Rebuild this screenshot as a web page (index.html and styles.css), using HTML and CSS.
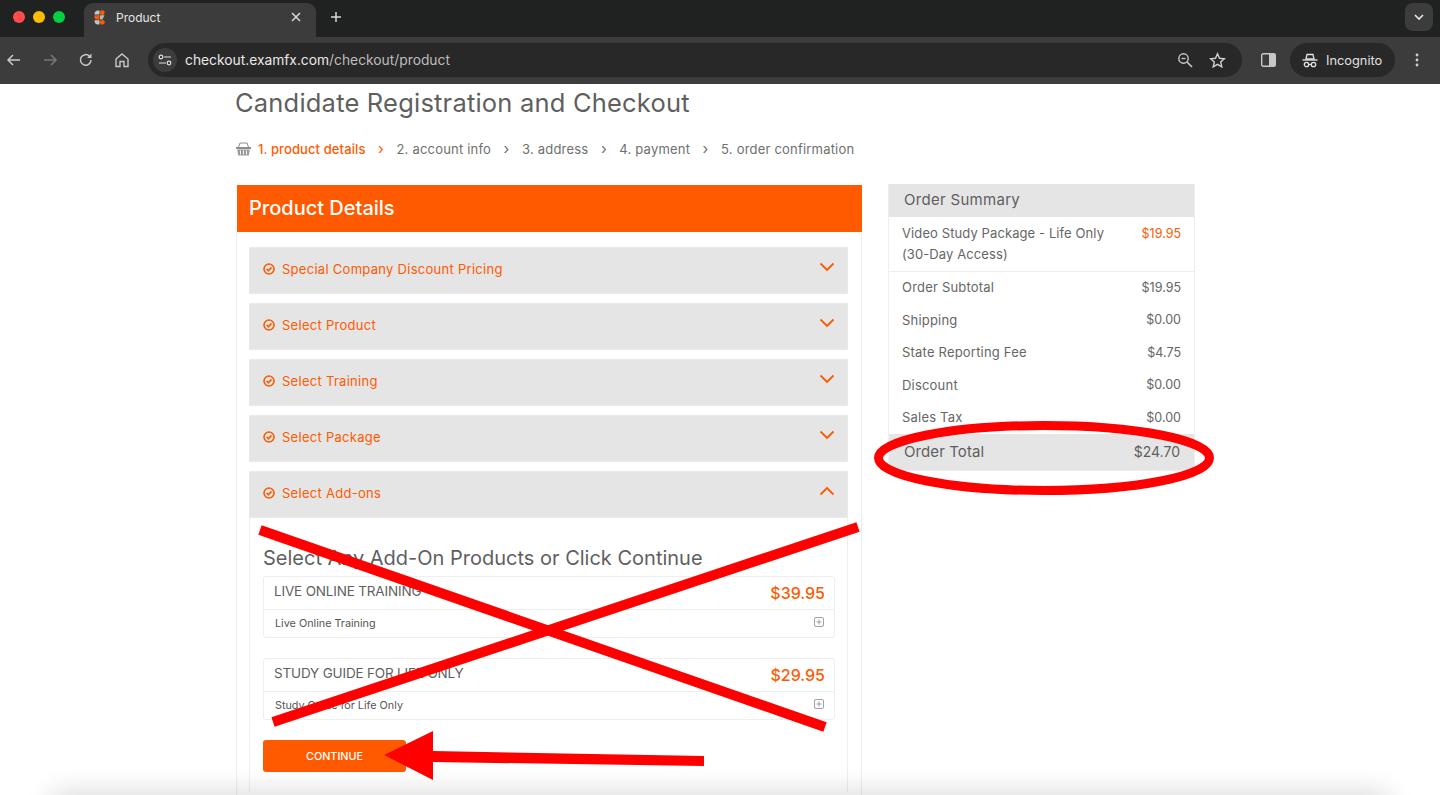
FILE: index.html
```html
<!DOCTYPE html>
<html lang="en">
<head>
  <meta charset="UTF-8" />
  <title>Product</title>
  <link rel="stylesheet" href="styles.css">
</head>
<body>

  <!-- Browser tabs -->
  <div class="tabstrip">
    <div class="traffic">
      <span class="dot red"></span>
      <span class="dot yellow"></span>
      <span class="dot green"></span>
    </div>
    <div class="tab">
      <svg class="favicon" width="11" height="15" viewBox="0 0 11 15">
        <path d="M5.500 0.500 H4 Q0.500 0.500 0.500 4.500 H5.500 Z" fill="#c4c4c4"/>
        <circle cx="8.300" cy="2.700" r="2.400" fill="#ff5a00"/>
        <path d="M0.500 5.200 H5.500 V9.500 H3 Q0.500 9.500 0.500 7.300 Z" fill="#ff5a00"/>
        <path d="M6 5.200 H10.500 L8.500 9.500 H6 Z" fill="#b5b5b5"/>
        <path d="M0.500 10.200 H5.500 V14.500 H4 Q0.500 14.500 0.500 10.200 Z" fill="#c4c4c4"/>
        <circle cx="8.300" cy="12.300" r="2.400" fill="#ff5a00"/>
      </svg>
      <span class="tab-title">Product</span>
      <svg class="tab-close" width="10" height="10" viewBox="0 0 10 10">
        <path d="M1 1 L9 9 M9 1 L1 9" stroke="#d8d8d8" stroke-width="1.500"/>
      </svg>
    </div>
    <svg class="new-tab" width="12" height="12" viewBox="0 0 12 12">
      <path d="M6 1 V11 M1 6 H11" stroke="#d8d8d8" stroke-width="1.500"/>
    </svg>
    <div class="tab-search">
      <svg width="10" height="7" viewBox="0 0 10 7">
        <path d="M1 1 L5 5 L9 1" fill="none" stroke="#e8e8e8" stroke-width="1.600"/>
      </svg>
    </div>
  </div>

  <!-- Browser toolbar -->
  <div class="toolbar">
    <svg class="tool back" width="16" height="16" viewBox="0 0 16 16">
      <path d="M14 8 H2 M7 3 L2 8 L7 13" fill="none" stroke="#c8c8c8" stroke-width="1.500"/>
    </svg>
    <svg class="tool forward" width="16" height="16" viewBox="0 0 16 16">
      <path d="M2 8 H14 M9 3 L14 8 L9 13" fill="none" stroke="#777" stroke-width="1.500"/>
    </svg>
    <svg class="tool reload" width="16" height="16" viewBox="0 0 16 16">
      <path d="M13 8 A5.300 5.300 0 1 1 11.500 4.200" fill="none" stroke="#c8c8c8" stroke-width="1.500"/>
      <path d="M13.500 1.500 V6 H9 Z" fill="#c8c8c8"/>
    </svg>
    <svg class="tool home" width="16" height="16" viewBox="0 0 16 16">
      <path d="M2 7 L8 2 L14 7 V14.500 H10 V9.500 H6 V14.500 H2 Z" fill="none" stroke="#c8c8c8" stroke-width="1.400"/>
    </svg>
    <div class="omnibox">
      <span class="site-info">
        <svg width="14" height="12" viewBox="0 0 14 12">
          <circle cx="3" cy="3" r="1.800" fill="none" stroke="#e0e0e0" stroke-width="1.200"/>
          <path d="M6 3 H13 M1 9 H8" stroke="#e0e0e0" stroke-width="1.200"/>
          <circle cx="11" cy="9" r="1.800" fill="none" stroke="#e0e0e0" stroke-width="1.200"/>
        </svg>
      </span>
      <span class="url"><span class="url-host">checkout.examfx.com</span>/checkout/product</span>
      <svg class="zoom-icon" width="16" height="16" viewBox="0 0 16 16">
        <circle cx="6.500" cy="6.500" r="4.700" fill="none" stroke="#c8c8c8" stroke-width="1.400"/>
        <path d="M4.500 6.500 H8.500" stroke="#c8c8c8" stroke-width="1.300"/>
        <path d="M10 10 L15 15" stroke="#c8c8c8" stroke-width="1.600"/>
      </svg>
      <svg class="star-icon" width="17" height="17" viewBox="0 0 17 17">
        <path d="M8.500 1.800 L10.500 6.300 L15.400 6.800 L11.700 10 L12.800 14.900 L8.500 12.400 L4.200 14.900 L5.300 10 L1.600 6.800 L6.500 6.300 Z" fill="none" stroke="#d0d0d0" stroke-width="1.400"/>
      </svg>
    </div>
    <svg class="side-panel" width="15" height="14" viewBox="0 0 15 14">
      <rect x="0.700" y="0.700" width="13.600" height="12.600" rx="1.500" fill="none" stroke="#c8c8c8" stroke-width="1.400"/>
      <rect x="8" y="1" width="6" height="12" fill="#c8c8c8"/>
    </svg>
    <div class="incognito">
      <svg width="16" height="15" viewBox="0 0 16 15">
        <path d="M4 6 L5 1.500 H11 L12 6 Z" fill="none" stroke="#e0e0e0" stroke-width="1.300"/>
        <path d="M0.500 7 H15.500" stroke="#e0e0e0" stroke-width="1.400"/>
        <circle cx="4.500" cy="11.500" r="2.200" fill="none" stroke="#e0e0e0" stroke-width="1.300"/>
        <circle cx="11.500" cy="11.500" r="2.200" fill="none" stroke="#e0e0e0" stroke-width="1.300"/>
        <path d="M6.700 11.500 H9.300" stroke="#e0e0e0" stroke-width="1.200"/>
      </svg>
      <span>Incognito</span>
    </div>
    <svg class="menu-dots" width="4" height="14" viewBox="0 0 4 14">
      <circle cx="2" cy="2" r="1.400" fill="#d0d0d0"/>
      <circle cx="2" cy="7" r="1.400" fill="#d0d0d0"/>
      <circle cx="2" cy="12" r="1.400" fill="#d0d0d0"/>
    </svg>
  </div>

  <!-- Page -->
  <main class="page">
    <h1 class="page-title">Candidate Registration and Checkout</h1>

    <ul class="steps">
      <li class="step active">
        <svg class="basket" width="15" height="14" viewBox="0 0 15 14">
          <path d="M2.500 5 L4 1 H11 L12.500 5" stroke="#8c8c8c" stroke-width="1" fill="none"/>
          <path d="M0 5 H15 V7 H0 Z" fill="#8c8c8c"/>
          <path d="M1.200 7.500 H13.800 L12.800 13.500 H2.200 Z" fill="#9a9a9a"/>
          <path d="M4.500 8.500 V12.500 M7.500 8.500 V12.500 M10.500 8.500 V12.500" stroke="#fff" stroke-width="0.900"/>
        </svg>
        1. product details
      </li>
      <li class="sep active">›</li>
      <li class="step">2. account info</li>
      <li class="sep">›</li>
      <li class="step">3. address</li>
      <li class="sep">›</li>
      <li class="step">4. payment</li>
      <li class="sep">›</li>
      <li class="step">5. order confirmation</li>
    </ul>

    <div class="columns">
      <section class="details">
        <h2 class="details-head">Product Details</h2>
        <div class="details-body">

          <div class="acc-bar">
            <svg class="check" width="12" height="12" viewBox="0 0 12 12"><circle cx="6" cy="6" r="5"/><path d="M3.600 6 L5.400 7.800 L8.500 4.400"/></svg>
            <span>Special Company Discount Pricing</span>
            <svg class="chev" width="16" height="10" viewBox="0 0 16 10"><path d="M1.500 1.500 L8 8 L14.500 1.500"/></svg>
          </div>
          <div class="acc-bar">
            <svg class="check" width="12" height="12" viewBox="0 0 12 12"><circle cx="6" cy="6" r="5"/><path d="M3.600 6 L5.400 7.800 L8.500 4.400"/></svg>
            <span>Select Product</span>
            <svg class="chev" width="16" height="10" viewBox="0 0 16 10"><path d="M1.500 1.500 L8 8 L14.500 1.500"/></svg>
          </div>
          <div class="acc-bar">
            <svg class="check" width="12" height="12" viewBox="0 0 12 12"><circle cx="6" cy="6" r="5"/><path d="M3.600 6 L5.400 7.800 L8.500 4.400"/></svg>
            <span>Select Training</span>
            <svg class="chev" width="16" height="10" viewBox="0 0 16 10"><path d="M1.500 1.500 L8 8 L14.500 1.500"/></svg>
          </div>
          <div class="acc-bar">
            <svg class="check" width="12" height="12" viewBox="0 0 12 12"><circle cx="6" cy="6" r="5"/><path d="M3.600 6 L5.400 7.800 L8.500 4.400"/></svg>
            <span>Select Package</span>
            <svg class="chev" width="16" height="10" viewBox="0 0 16 10"><path d="M1.500 1.500 L8 8 L14.500 1.500"/></svg>
          </div>
          <div class="acc-bar">
            <svg class="check" width="12" height="12" viewBox="0 0 12 12"><circle cx="6" cy="6" r="5"/><path d="M3.600 6 L5.400 7.800 L8.500 4.400"/></svg>
            <span>Select Add-ons</span>
            <svg class="chev" width="16" height="10" viewBox="0 0 16 10"><path d="M1.500 8.500 L8 2 L14.500 8.500"/></svg>
          </div>

          <div class="addons">
            <h3 class="addons-title">Select Any Add-On Products or Click Continue</h3>

            <div class="addon">
              <div class="addon-head">
                <span class="addon-name">LIVE ONLINE TRAINING</span>
                <span class="addon-price">$39.95</span>
              </div>
              <div class="addon-foot">
                <span>Live Online Training</span>
                <svg class="plus" width="10" height="10" viewBox="0 0 10 10"><rect x="0.500" y="0.500" width="9" height="9" rx="1.500"/><path d="M5 2.500 V7.500 M2.500 5 H7.500"/></svg>
              </div>
            </div>

            <div class="addon">
              <div class="addon-head">
                <span class="addon-name">STUDY GUIDE FOR LIFE ONLY</span>
                <span class="addon-price">$29.95</span>
              </div>
              <div class="addon-foot">
                <span>Study Guide for Life Only</span>
                <svg class="plus" width="10" height="10" viewBox="0 0 10 10"><rect x="0.500" y="0.500" width="9" height="9" rx="1.500"/><path d="M5 2.500 V7.500 M2.500 5 H7.500"/></svg>
              </div>
            </div>

            <button class="continue">CONTINUE</button>
          </div>
        </div>
      </section>

      <aside class="summary">
        <div class="summary-head">Order Summary</div>
        <div class="summary-item">
          <span>Video Study Package - Life Only (30-Day Access)</span>
          <span class="item-price">$19.95</span>
        </div>
        <div class="summary-rows">
          <div class="summary-row"><span>Order Subtotal</span><span class="amount">$19.95</span></div>
          <div class="summary-row"><span>Shipping</span><span class="amount">$0.00</span></div>
          <div class="summary-row"><span>State Reporting Fee</span><span class="amount">$4.75</span></div>
          <div class="summary-row"><span>Discount</span><span class="amount">$0.00</span></div>
          <div class="summary-row"><span>Sales Tax</span><span class="amount">$0.00</span></div>
        </div>
        <div class="summary-total"><span class="total-label">Order Total</span><span>$24.70</span></div>
      </aside>
    </div>
  </main>

  <div class="bottom-shadow"></div>

  <!-- Red markup drawn on top of the screenshot -->
  <svg class="markup" width="1440" height="795" viewBox="0 0 1440 795">
    <path d="M260 530 L825 727" stroke="#fe0000" stroke-width="10"/>
    <path d="M858 527 L273 722" stroke="#fe0000" stroke-width="10"/>
    <ellipse cx="1044" cy="458" rx="165.500" ry="32.500" fill="none" stroke="#fe0000" stroke-width="9"/>
    <path d="M384 755 L433 731 V751 L704 756 V766 L433 762 V780 Z" fill="#fe0000"/>
  </svg>

</body>
</html>
```

FILE: styles.css
```css
* {
  box-sizing: border-box;
}

body {
  position: relative;
  width: 1440px;
  height: 795px;
  margin: 0;
  overflow: hidden;
  background-color: white;
  font-family: Inter, "Open Sans", sans-serif;
  color: #666;
}

/* browser chrome */
.tabstrip {
  display: flex;
  align-items: flex-start;
  height: 37px;
  background-color: #202221;
}

.traffic {
  display: flex;
  gap: 8px;
  width: 84px;
  margin-top: 11px;
  padding-left: 13px;
}

.dot {
  width: 12px;
  height: 12px;
  border-radius: 50%;
}

.dot.red { background-color: #ff4b4b; }
.dot.yellow { background-color: #ffbd00; }
.dot.green { background-color: #00cf3f; }

.tab {
  display: flex;
  align-items: center;
  width: 232px;
  height: 34px;
  margin-top: 3px;
  padding: 0 15px 6px 10px;
  background-color: #3c3c3c;
  border-radius: 9px 9px 0 0;
  color: #e4e4e4;
  font-size: 12px;
}

.tab-title {
  flex: 1;
  margin-left: 11px;
}

.new-tab {
  margin-top: 11px;
  margin-left: 14px;
}

.tab-search {
  display: flex;
  align-items: center;
  justify-content: center;
  width: 28px;
  height: 28px;
  margin-top: 3px;
  margin-left: auto;
  margin-right: 7px;
  background-color: #3c3c3c;
  border-radius: 8px;
}

.toolbar {
  display: flex;
  align-items: center;
  height: 47px;
  padding-left: 6px;
  padding-bottom: 1px;
  background-color: #3c3c3c;
}

.tool {
  flex: none;
  margin-right: 20px;
}

.tool.home {
  margin-right: 18px;
}

.omnibox {
  display: flex;
  align-items: center;
  width: 1094px;
  height: 34px;
  padding-left: 5px;
  background-color: #282828;
  border-radius: 17px;
}

.site-info {
  display: flex;
  align-items: center;
  justify-content: center;
  width: 24px;
  height: 24px;
  background-color: #3c3c3c;
  border-radius: 50%;
}

.url {
  flex: 1;
  margin-left: 8px;
  color: #bdbdbd;
  font-size: 13.800px;
}

.url-host {
  color: #e8e8e8;
}

.zoom-icon {
  margin-right: 16px;
}

.star-icon {
  margin-right: 16px;
}

.side-panel {
  margin-left: 19px;
}

.incognito {
  display: flex;
  align-items: center;
  gap: 8px;
  width: 105px;
  height: 34px;
  margin-left: 14px;
  padding-left: 12px;
  background-color: #282828;
  border-radius: 17px;
  color: #e0e0e0;
  font-size: 12.800px;
}

.menu-dots {
  margin-left: 20px;
}

/* page */
.page {
  padding-left: 235px;
}

.page-title {
  height: 38px;
  margin: 0;
  font-size: 25.500px;
  font-weight: 400;
  line-height: 38px;
  letter-spacing: 0.200px;
  color: #5f5f5f;
}

.steps {
  display: flex;
  align-items: center;
  height: 20px;
  margin: 17px 0 25px 1px;
  padding: 0;
  list-style: none;
  font-size: 13px;
  letter-spacing: 0.200px;
  color: #6f6f6f;
}

.step.active {
  display: flex;
  align-items: center;
  gap: 7px;
  color: #ff5a00;
  font-weight: 500;
  letter-spacing: 0.100px;
}

.sep {
  margin: 0 12.500px;
  font-size: 15px;
  line-height: 20px;
}

.sep.active {
  color: #ff5a00;
}

.columns {
  display: flex;
  align-items: flex-start;
  gap: 26px;
  margin-left: 1px;
}

.details {
  width: 626px;
  margin-top: 1px;
  padding-left: 1px;
}

.details-head {
  height: 47px;
  margin: 0;
  padding-left: 12px;
  background-color: #ff5a00;
  color: white;
  font-size: 20px;
  font-weight: 500;
  line-height: 47px;
}

.details-body {
  margin-left: -1px;
  padding: 15px 13px 40px 12px;
  border-left: 1px solid #eee;
  border-right: 1px solid #eee;
}

.acc-bar {
  display: flex;
  align-items: center;
  height: 47px;
  margin-bottom: 9px;
  padding: 0 12px 4px 13px;
  background-color: #e5e5e5;
  border: 1px solid #eaeaea;
  color: #ff5a00;
  font-size: 13px;
  letter-spacing: 0.280px;
}

.acc-bar span {
  flex: 1;
  margin-left: 7px;
}

.check {
  fill: none;
  stroke: #ff5a00;
  stroke-width: 1.600;
}

.chev {
  align-self: flex-start;
  margin-top: 14px;
  fill: none;
  stroke: #ff5a00;
  stroke-width: 1.800;
}

.addons {
  margin-top: -9px;
  padding: 28px 12px 20px 13px;
  border-left: 1px solid #eee;
  border-right: 1px solid #eee;
}

.addons-title {
  height: 30px;
  margin: 0;
  font-size: 20px;
  font-weight: 400;
  line-height: 24px;
  color: #5f5f5f;
}

.addon {
  margin-bottom: 20px;
  border: 1px solid #eee;
  border-radius: 3px;
}

.addon-head {
  display: flex;
  justify-content: space-between;
  align-items: center;
  height: 33px;
  padding: 0 9px 0 10px;
  border-bottom: 1px solid #eee;
}

.addon-name {
  margin-top: -4px;
  font-size: 13.500px;
  letter-spacing: -0.170px;
  color: #5f5f5f;
}

.addon-price {
  color: #ff5a00;
  font-size: 16px;
  font-weight: 500;
}

.addon-foot {
  display: flex;
  justify-content: space-between;
  align-items: center;
  height: 27px;
  padding: 0 10px 0 11px;
  font-size: 10.800px;
  color: #555;
}

.plus {
  margin-top: -4px;
  fill: none;
  stroke: #8a8a8a;
  stroke-width: 0.800;
}

.continue {
  display: block;
  width: 143px;
  height: 32px;
  padding: 0;
  background-color: #ff5a00;
  color: white;
  border: none;
  border-radius: 3px;
  font-family: inherit;
  font-size: 10.800px;
  font-weight: 500;
}

/* order summary */
.summary {
  width: 307px;
  border: 1px solid #eee;
  border-top: none;
  font-size: 13px;
  letter-spacing: 0.200px;
}

.summary-head {
  height: 33px;
  padding-left: 15px;
  background-color: #e5e5e5;
  font-size: 15px;
  letter-spacing: 0.300px;
  line-height: 32px;
  color: #5f5f5f;
}

.summary-item {
  display: flex;
  justify-content: space-between;
  gap: 30px;
  height: 55px;
  padding: 6px 13px 0;
  border-bottom: 1px solid #eee;
  letter-spacing: 0.100px;
  line-height: 21px;
}

.item-price {
  color: #ff5a00;
  font-size: 12.500px;
  letter-spacing: 0;
}

.summary-rows {
  margin-top: -1px;
  padding: 0 13px;
}

.summary-row {
  display: flex;
  justify-content: space-between;
  align-items: center;
  height: 32.500px;
}

.amount {
  font-size: 12.500px;
  letter-spacing: 0;
}

.summary-total {
  display: flex;
  justify-content: space-between;
  align-items: center;
  height: 36px;
  padding: 0 14px 0 15px;
  background-color: #e5e5e5;
  font-size: 14px;
  letter-spacing: 0;
  color: #5f5f5f;
}

.total-label {
  font-size: 15px;
  letter-spacing: 0.100px;
}

/* overlays */
.bottom-shadow {
  position: absolute;
  left: 50px;
  right: 50px;
  top: 795px;
  height: 20px;
  border-radius: 20px;
  box-shadow: 0 0 28px rgba(0, 0, 0, 0.2);
}

.markup {
  position: absolute;
  top: 0;
  left: 0;
}
```
